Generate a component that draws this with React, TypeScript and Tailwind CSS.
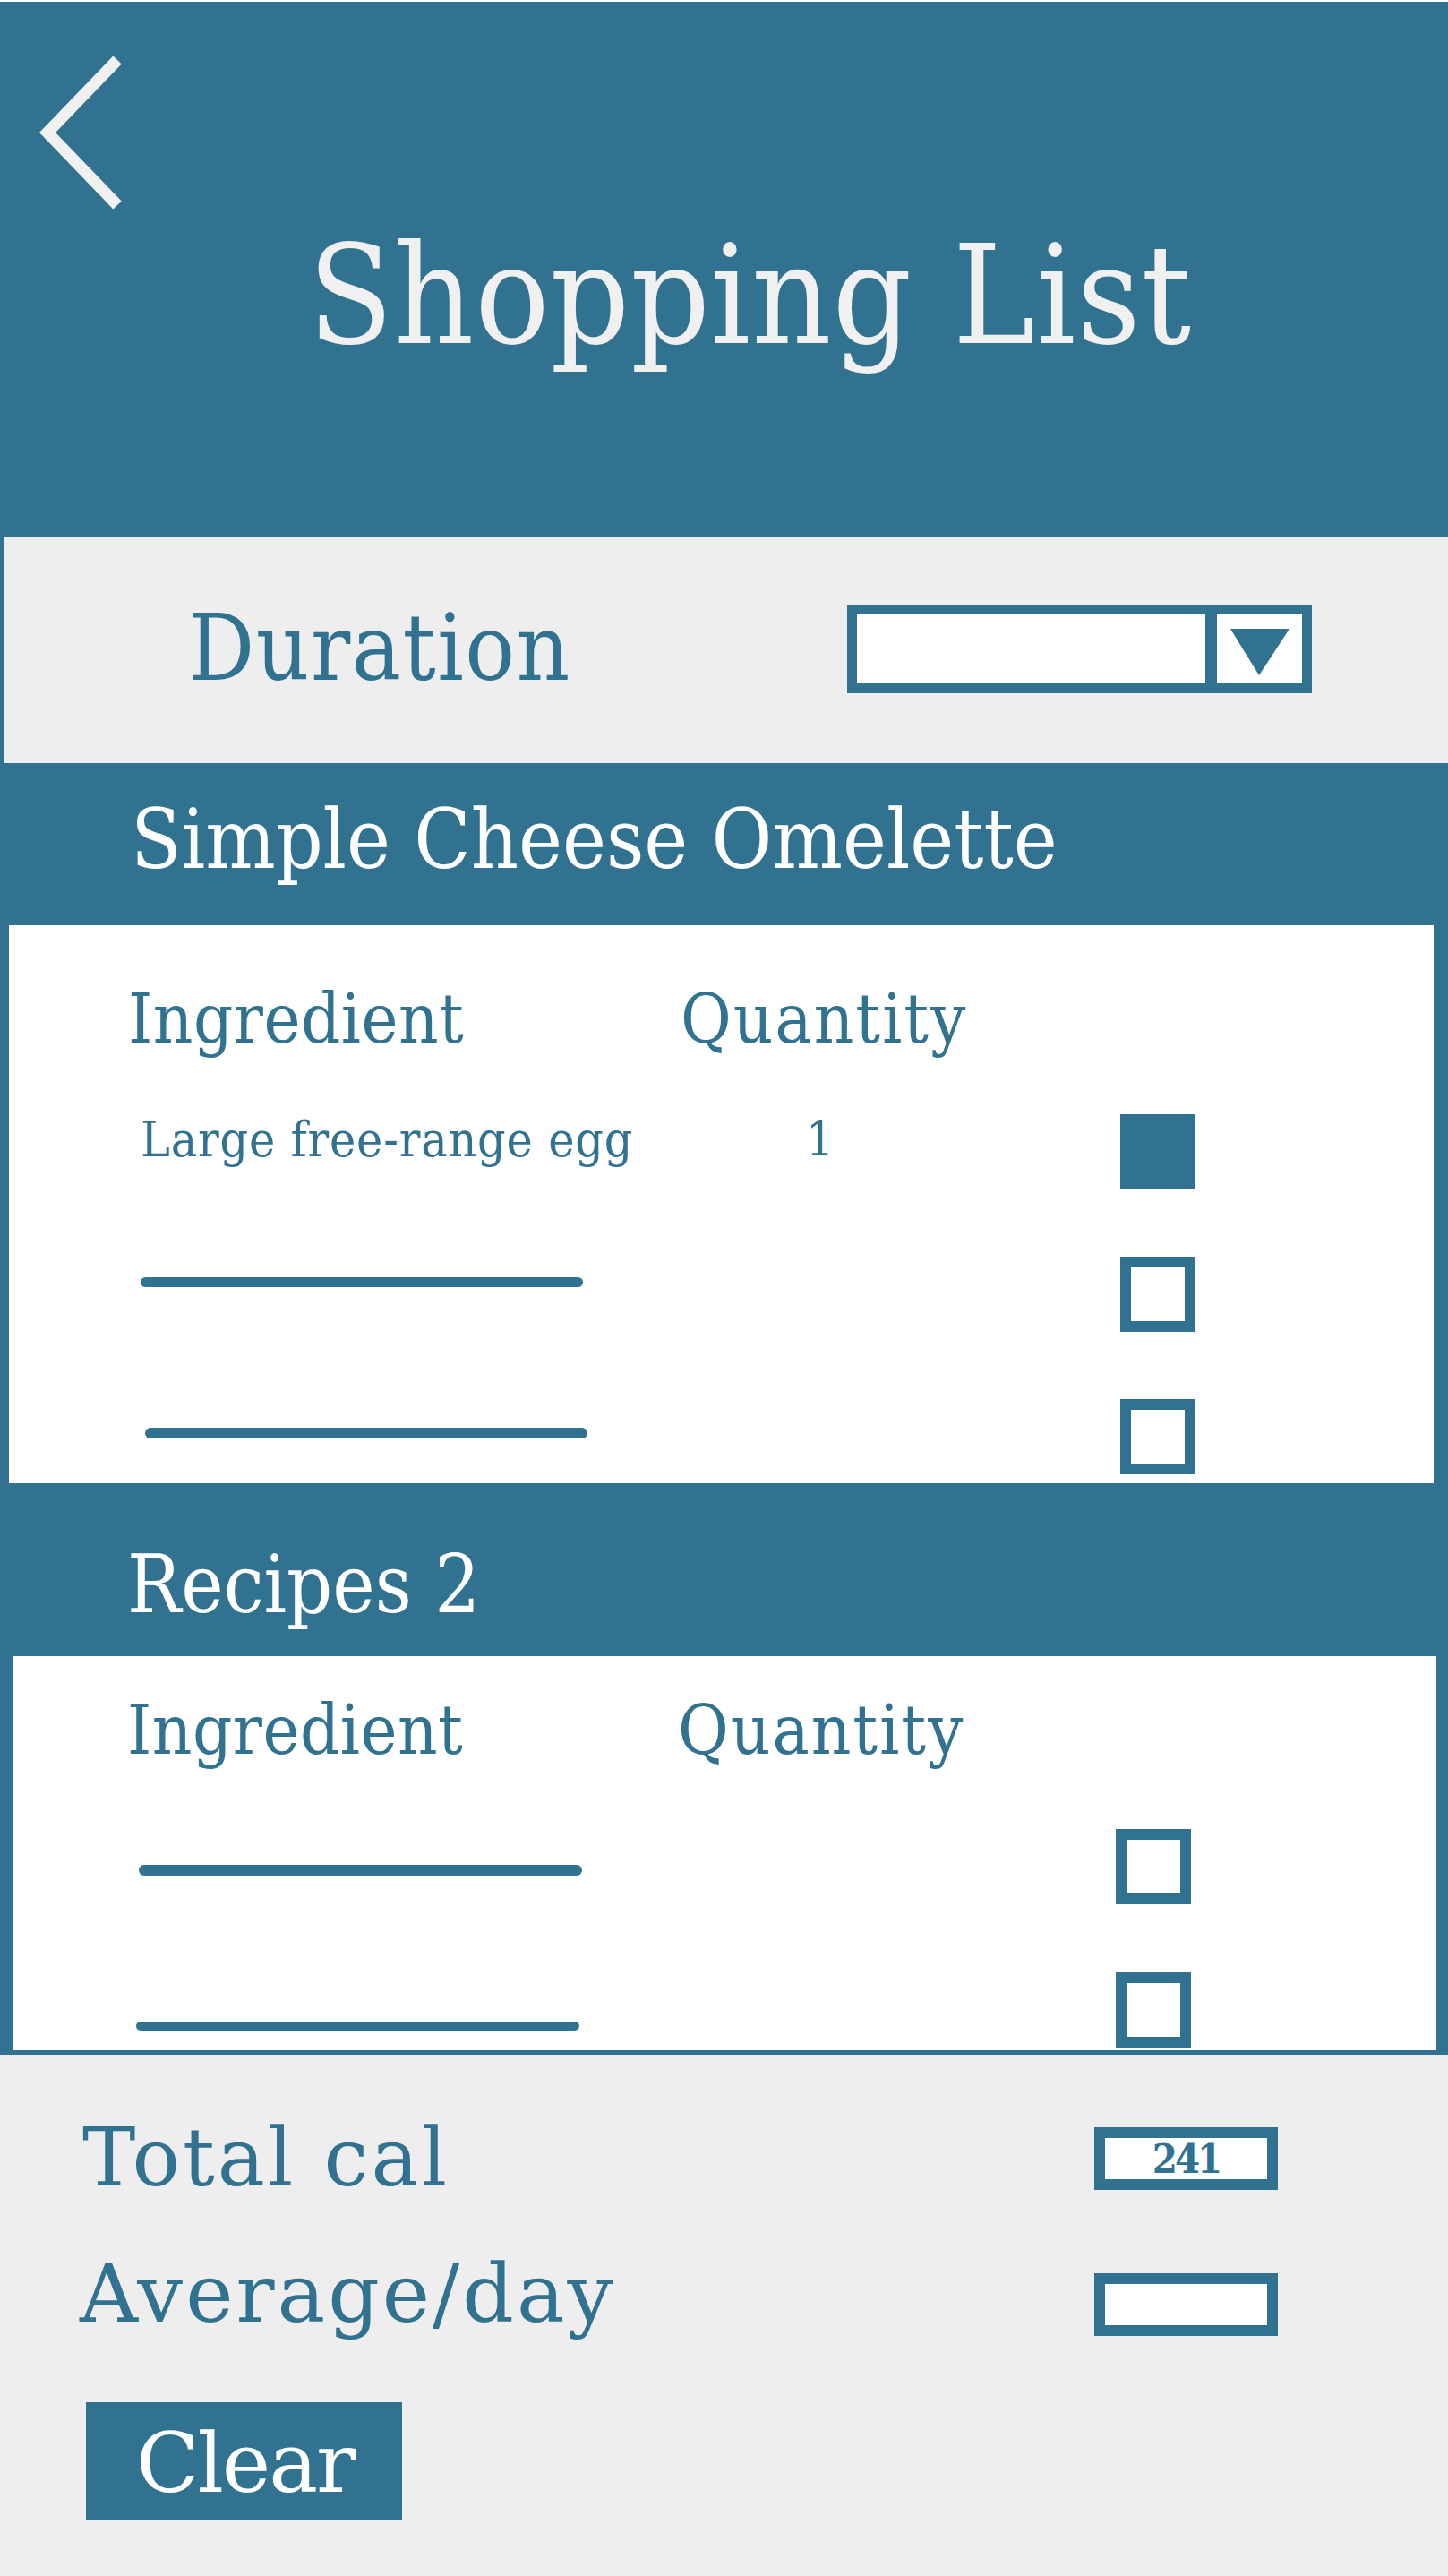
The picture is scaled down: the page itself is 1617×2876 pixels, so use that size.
import React from 'react';

type BoxProps = {
  checked?: boolean;
};

// square check box drawn as a thick outline, filled when checked
function CheckBox({ checked = false }: BoxProps) {
  return (
    <div
      className={
        checked
          ? 'h-[84px] w-[84px] shrink-0 bg-[#317291]'
          : 'h-[84px] w-[84px] shrink-0 border-[12px] border-[#317291] bg-white'
      }
    />
  );
}

export default function App() {
  return (
    <div className="flex h-[2876px] w-[1617px] flex-col overflow-hidden bg-white pt-[2px] font-['DejaVu_Serif_Condensed','DejaVu_Serif',serif] text-[#317291]">
      {/* Header */}
      <header className="h-[598px] shrink-0 bg-[#317291] text-[#f0f0f0]">
        <div className="pl-[40px] pt-[58px]">
          <svg width="100" height="176" viewBox="0 0 100 176" fill="none">
            <path d="M91 7 L13 88 L91 169" stroke="#f0f0f0" strokeWidth="13" strokeLinejoin="miter" />
          </svg>
        </div>
        <h1 className="ml-[344px] mt-[17px] text-[154px] font-normal leading-none tracking-[1px]">Shopping List</h1>
      </header>

      {/* Duration */}
      <section className="flex h-[252px] shrink-0 items-start border-l-[5px] border-[#317291] bg-[#eeeeee] pt-[72px]">
        <div className="w-[941px] pl-[205px] text-[103px] leading-none tracking-[1.5px]">Duration</div>
        <div className="mt-[3px] flex h-[99px] w-[519px] border-[11px] border-[#317291] bg-white">
          <div className="w-[389px]" />
          <div className="flex w-[108px] justify-center border-l-[13px] border-[#317291] pt-[16px]">
            <svg width="66" height="52" viewBox="0 0 66 52">
              <polygon points="0,0 66,0 32,52" fill="#317291" />
            </svg>
          </div>
        </div>
      </section>

      {/* Recipe 1 */}
      <div className="h-[181px] shrink-0 bg-[#317291] pl-[146px] pt-[40px] text-[92px] leading-none text-white">
        Simple Cheese Omelette
      </div>
      <div className="h-[623px] shrink-0 border-l-[10px] border-r-[16px] border-[#317291] bg-white pt-[66px]">
        <div className="flex text-[77px] leading-none">
          <div className="w-[750px] pl-[133px] tracking-[0.5px]">Ingredient</div>
          <div className="tracking-[2px]">Quantity</div>
        </div>
        <div className="mt-[68px]">
          <div className="flex h-[159px] items-start">
            <div className="w-[890px] pl-[147px] pt-[1px] text-[55px] leading-none tracking-[0.8px]">Large free-range egg</div>
            <div className="w-[351px] pt-[1px] text-[55px] leading-none">1</div>
            <CheckBox checked />
          </div>
          <div className="flex h-[159px] items-start">
            <div className="w-[1241px] pl-[147px] pt-[23px]">
              <div className="h-[11px] w-[494px] rounded-full bg-[#317291]" />
            </div>
            <CheckBox />
          </div>
          <div className="flex items-start">
            <div className="w-[1241px] pl-[152px] pt-[32px]">
              <div className="h-[12px] w-[494px] rounded-full bg-[#317291]" />
            </div>
            <CheckBox />
          </div>
        </div>
      </div>

      {/* Recipe 2 */}
      <div className="h-[193px] shrink-0 bg-[#317291] pl-[142px] pt-[69px] text-[89px] leading-none text-white">
        Recipes 2
      </div>
      <div className="h-[445px] shrink-0 border-b-[5px] border-l-[14px] border-r-[13px] border-[#317291] bg-white pt-[44px]">
        <div className="flex text-[77px] leading-none">
          <div className="w-[743px] pl-[128px] tracking-[0.5px]">Ingredient</div>
          <div className="tracking-[2px]">Quantity</div>
        </div>
        <div className="mt-[72px]">
          <div className="flex h-[160px] items-start">
            <div className="w-[1232px] pl-[141px] pt-[40px]">
              <div className="h-[12px] w-[495px] rounded-full bg-[#317291]" />
            </div>
            <CheckBox />
          </div>
          <div className="flex items-start">
            <div className="w-[1232px] pl-[138px] pt-[55px]">
              <div className="h-[10px] w-[495px] rounded-full bg-[#317291]" />
            </div>
            <CheckBox />
          </div>
        </div>
      </div>

      {/* Totals */}
      <section className="flex-1 bg-[#eeeeee] pt-[71px] font-['DejaVu_Serif',serif]">
        <div className="flex h-[151px] items-start">
          <div className="w-[1222px] pl-[92px] text-[89px] leading-none tracking-[3px]">Total cal</div>
          <div className="mt-[10px] flex h-[70px] w-[205px] items-center justify-center border-[12px] border-[#317291] bg-white font-['DejaVu_Serif_Condensed','DejaVu_Serif',serif] text-[45px] font-bold leading-none tracking-[-3px]">
            241
          </div>
        </div>
        <div className="flex h-[166px] items-start">
          <div className="w-[1222px] pl-[89px] text-[90px] leading-none tracking-[3px]">Average/day</div>
          <div className="mt-[22px] h-[70px] w-[205px] border-[12px] border-[#317291] bg-white" />
        </div>
        <button className="ml-[96px] flex h-[131px] w-[353px] items-start bg-[#317291] pl-[56px] pt-[23px] text-[92px] leading-none tracking-[-2px] text-white">
          Clear
        </button>
      </section>
    </div>
  );
}
